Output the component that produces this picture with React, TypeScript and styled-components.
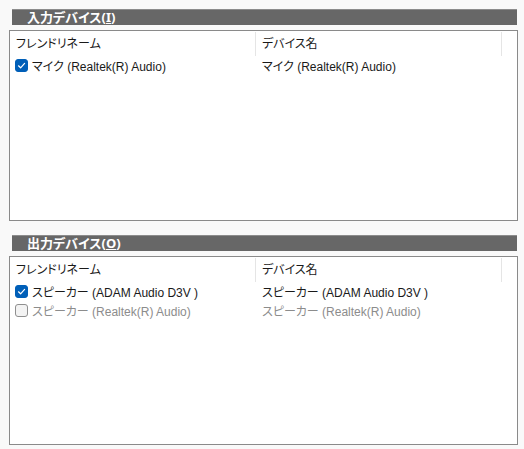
import { FC } from 'react';
import styled, { createGlobalStyle } from 'styled-components';

const GlobalStyle = createGlobalStyle`
  html, body {
    margin: 0;
    padding: 0;
    background: #f9f9f9;
  }
  body {
    font-family: 'Liberation Sans', 'Noto Sans CJK JP', sans-serif;
    font-size: 12px;
    font-feature-settings: 'palt';
    color: #1a1a1a;
  }
`;

type Device = {
  name: string;
  checked: boolean;
  disabled?: boolean;
};

const inputDevices: Device[] = [{ name: 'マイク (Realtek(R) Audio)', checked: true }];

const outputDevices: Device[] = [
  { name: 'スピーカー (ADAM Audio D3V )', checked: true },
  { name: 'スピーカー (Realtek(R) Audio)', checked: false, disabled: true },
];

const CheckIcon: FC = () => (
  <svg width="9" height="9" viewBox="0 0 9 9">
    <path d="M1.5 4.8 L3.6 6.8 L7.6 2.4" fill="none" stroke="#ffffff" strokeWidth="1.2" strokeLinecap="round" strokeLinejoin="round" />
  </svg>
);

const DeviceSection: FC<{ title: string; accessKey: string; devices: Device[]; height: number }> = ({
  title,
  accessKey,
  devices,
  height,
}) => {
  return (
    <Section>
      <SectionTitle>
        {title}(<u>{accessKey}</u>)
      </SectionTitle>
      <ListBox $height={height}>
        <HeaderRow>
          <HeaderCell>フレンドリネーム</HeaderCell>
          <HeaderCell>デバイス名</HeaderCell>
          <HeaderFiller />
        </HeaderRow>
        {devices.map((d) => (
          <Row key={d.name} $disabled={d.disabled}>
            <NameCell>
              <Checkbox $checked={d.checked}>{d.checked && <CheckIcon />}</Checkbox>
              {d.name}
            </NameCell>
            <Cell>{d.name}</Cell>
          </Row>
        ))}
      </ListBox>
    </Section>
  );
};

const App: FC = () => {
  return (
    <Page>
      <GlobalStyle />
      <DeviceSection title="入力デバイス" accessKey="I" devices={inputDevices} height={191} />
      <DeviceSection title="出力デバイス" accessKey="O" devices={outputDevices} height={189} />
    </Page>
  );
};

export default App;

const Page = styled.div`
  display: flex;
  flex-direction: column;
  gap: 14px;
  padding: 9px 6px 0 9px;
  width: 524px;
  box-sizing: border-box;
`;

const Section = styled.section`
  display: flex;
  flex-direction: column;
  gap: 5px;
`;

const SectionTitle = styled.div`
  margin-left: 3px;
  margin-right: 1px;
  height: 16px;
  line-height: 15px;
  background: #676767;
  border-top: 1px solid #8c8c8c;
  box-sizing: border-box;
  padding-left: 15px;
  color: #ffffff;
  font-family: 'Noto Sans', 'Noto Sans CJK JP', sans-serif;
  font-weight: bold;
  font-size: 13px;
  u {
    text-decoration-thickness: 1px;
    text-underline-offset: 1px;
  }
`;

const ListBox = styled.div<{ $height: number }>`
  height: ${(p) => p.$height}px;
  box-sizing: border-box;
  background: #ffffff;
  border: 1px solid #8a8a8a;
  display: flex;
  flex-direction: column;
`;

const HeaderRow = styled.div`
  display: grid;
  grid-template-columns: 246px 246px 1fr;
  height: 24px;
  padding-top: 1px;
`;

const HeaderCell = styled.div`
  padding-left: 6px;
  line-height: 24px;
  color: #1a1a1a;
  border-right: 1px solid #e5e5e5;
`;

const HeaderFiller = styled.div``;

const Row = styled.div<{ $disabled?: boolean }>`
  display: grid;
  grid-template-columns: 246px 1fr;
  height: 19px;
  align-items: center;
  color: ${(p) => (p.$disabled ? '#8c8c8c' : '#1a1a1a')};
`;

const Cell = styled.div`
  padding-left: 6px;
  white-space: nowrap;
`;

const NameCell = styled.div`
  display: flex;
  align-items: center;
  gap: 4px;
  padding-left: 5px;
  white-space: nowrap;
`;

const Checkbox = styled.span<{ $checked: boolean }>`
  width: 13px;
  height: 13px;
  box-sizing: border-box;
  border-radius: 3px;
  display: flex;
  align-items: center;
  justify-content: center;
  background: ${(p) => (p.$checked ? '#005fb8' : '#f3f3f3')};
  border: 1px solid ${(p) => (p.$checked ? '#005fb8' : '#8f8f8f')};
`;
